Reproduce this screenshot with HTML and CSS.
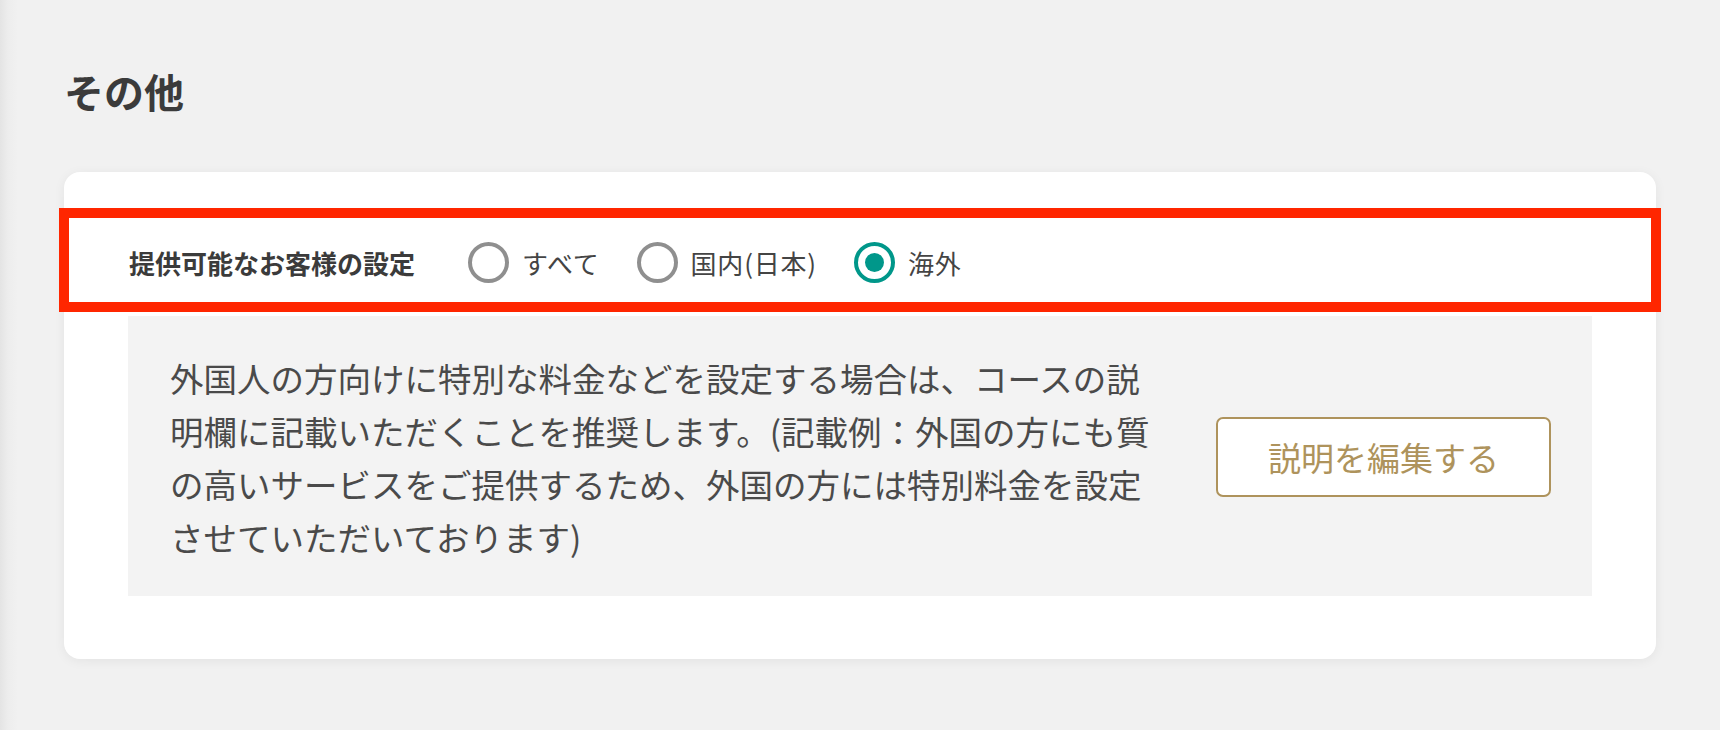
FILE: index.html
```html
<!DOCTYPE html>
<html lang="ja">
<head>
<meta charset="utf-8">
<link rel="stylesheet" href="styles.css">
</head>
<body>
<div class="page">
  <h1 class="title">その他</h1>
  <section class="card">
    <div class="row">
      <div class="label">提供可能なお客様の設定</div>
      <div class="radios">
        <div class="radio"><span class="circle"></span><span class="rtext">すべて</span></div>
        <div class="radio"><span class="circle"></span><span class="rtext">国内(日本)</span></div>
        <div class="radio checked"><span class="circle"><span class="dot"></span></span><span class="rtext">海外</span></div>
      </div>
    </div>
    <div class="info">
      <p class="note">外国人の方向けに特別な料金などを設定する場合は、コースの説<br>明欄に記載いただくことを推奨します。(記載例：外国の方にも質<br>の高いサービスをご提供するため、外国の方には特別料金を設定<br>させていただいております)</p>
      <button class="edit">説明を編集する</button>
    </div>
    <div class="highlight"></div>
  </section>
</div>
</body>
</html>
```

FILE: styles.css
```css
html, body {
  margin: 0;
  padding: 0;
}
body {
  width: 1720px;
  height: 730px;
  background: linear-gradient(to right, #e4e4e4 0px, #ededed 8px, #f1f1f1 18px, #f1f1f1 100%);
  font-family: "Noto Sans CJK JP", "Noto Sans", sans-serif;
  color: #444;
  overflow: hidden;
}
.page {
  padding: 71px 64px 0 64px;
}
.title {
  margin: 0 0 61px 0;
  font-size: 40px;
  line-height: 40px;
  font-weight: 700;
  color: #3b3b3b;
}
.card {
  position: relative;
  background: #fff;
  border-radius: 16px;
  box-shadow: 0 2px 12px rgba(0, 0, 0, 0.06);
  padding: 36px 64px 63px 64px;
}
.row {
  display: flex;
  align-items: center;
  height: 108px;
  padding-left: 1px;
}
.label {
  font-size: 26px;
  font-weight: 700;
  color: #3b3b3b;
  margin-right: 53px;
}
.radios {
  display: flex;
  align-items: center;
  gap: 37px;
}
.radio {
  display: flex;
  align-items: center;
  gap: 13px;
}
.circle {
  width: 41px;
  height: 41px;
  box-sizing: border-box;
  border: 4px solid #8f8f8f;
  border-radius: 50%;
  display: flex;
  align-items: center;
  justify-content: center;
  background: #fff;
}
.checked .circle {
  border-color: #00978a;
}
.dot {
  width: 19px;
  height: 19px;
  border-radius: 50%;
  background: #00978a;
}
.rtext {
  font-size: 26px;
  letter-spacing: 0.8px;
  color: #444;
  font-weight: 400;
}
.info {
  background: #f3f3f3;
  display: flex;
  align-items: center;
  gap: 46px;
  padding: 35px 41px 33px 42px;
}
.note {
  margin: 0;
  width: 1000px;
  font-size: 33.5px;
  line-height: 53px;
  color: #4a4a4a;
  font-weight: 400;
}
.edit {
  width: 335px;
  height: 80px;
  flex: none;
  box-sizing: border-box;
  border: 2px solid #ae935c;
  border-radius: 7px;
  background: #fff;
  color: #ae935c;
  font-family: "Noto Sans CJK JP", "Noto Sans", sans-serif;
  font-size: 33px;
  font-weight: 400;
  padding: 0;
}
.highlight {
  position: absolute;
  left: -5px;
  right: -5px;
  top: 36px;
  height: 104px;
  box-sizing: border-box;
  border: 10px solid #ff2600;
  pointer-events: none;
}
```
